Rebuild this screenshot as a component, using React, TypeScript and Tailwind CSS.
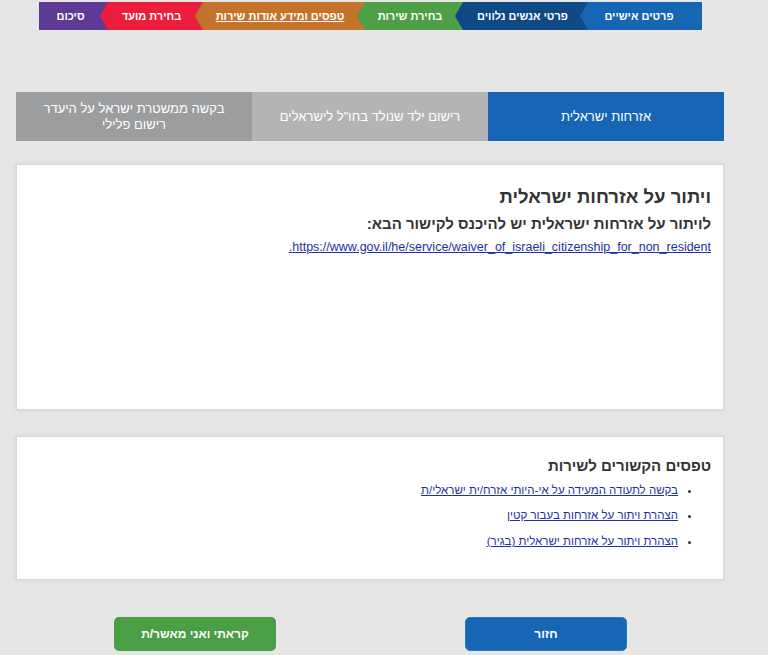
import React from "react";

const arrow = "[clip-path:polygon(0_50%,8px_0,100%_0,100%_100%,8px_100%)]";

export default function App() {
  return (
    <div
      dir="rtl"
      className="min-h-[655px] w-full bg-[#e6e6e6] pb-4"
      style={{ fontFamily: '"Liberation Sans", Arial, sans-serif' }}
    >
      {/* step bar */}
      <div className="flex pt-[2px] pr-[66px]">
        <div className={`relative z-[6] flex h-[28px] w-[122px] items-center justify-center bg-[#1666b5] pr-[4px] text-[11px] font-bold text-white ${arrow}`}>
          פרטים אישיים
        </div>
        <div className={`relative z-[5] -mr-[8px] flex h-[28px] w-[133px] items-center justify-center bg-[#0f4a86] pl-[2px] text-[11px] font-bold text-white ${arrow}`}>
          פרטי אנשים נלווים
        </div>
        <div className={`relative z-[4] -mr-[8px] flex h-[28px] w-[106px] items-center justify-center bg-[#4d9e45] text-[11px] font-bold text-white ${arrow}`}>
          בחירת שירות
        </div>
        <div className={`relative z-[3] -mr-[8px] flex h-[28px] w-[170px] items-center justify-center bg-[#c4742a] text-[11px] font-bold text-white underline ${arrow}`}>
          טפסים ומידע אודות שירות
        </div>
        <div className={`relative z-[2] -mr-[8px] flex h-[28px] w-[103px] items-center justify-center bg-[#ec1e3c] text-[11px] font-bold text-white ${arrow}`}>
          בחירת מועד
        </div>
        <div className="relative z-[1] -mr-[8px] flex h-[28px] w-[69px] items-center justify-center bg-[#5d3a94] pr-[6px] text-[11px] font-bold text-white">
          סיכום
        </div>
      </div>

      <div className="mr-[44px] ml-[16px]">
        {/* tabs */}
        <div className="mt-[62px] grid h-[49px] grid-cols-3">
          <div className="flex items-center justify-center bg-[#1666b5] text-[13px] text-white">
            אזרחות ישראלית
          </div>
          <div className="flex items-center justify-center bg-[#b4b4b4] text-[13px] text-white">
            רישום ילד שנולד בחו"ל לישראלים
          </div>
          <div className="flex flex-col items-center justify-center bg-[#9b9d9f] text-[13px] leading-[16px] text-white">
            <span>בקשה ממשטרת ישראל על היעדר</span>
            <span>רישום פלילי</span>
          </div>
        </div>

        {/* card 1 */}
        <div className="mt-[23px] h-[246px] border border-[#d9d9d9] bg-white px-[12px] pt-[20px] shadow-[0_0_4px_rgba(0,0,0,0.10)]">
          <h2 className="text-[18.5px] font-bold leading-[24px] text-[#333]">ויתור על אזרחות ישראלית</h2>
          <h3 className="mt-[5px] text-[15px] font-bold leading-[20px] text-[#333]">
            לויתור על אזרחות ישראלית יש להיכנס לקישור הבא:
          </h3>
          <p className="mt-[5px] text-[12.5px] leading-[16px]">
            <a href="#" className="text-[#1f2fa8] underline">
              https://www.gov.il/he/service/waiver_of_israeli_citizenship_for_non_resident.
            </a>
          </p>
        </div>

        {/* card 2 */}
        <div className="mt-[26px] h-[144px] border border-[#d9d9d9] bg-white px-[12px] pt-[19px] shadow-[0_0_4px_rgba(0,0,0,0.10)]">
          <h3 className="text-[15px] font-bold leading-[20px] text-[#333]">טפסים הקשורים לשירות</h3>
          <ul className="mt-[6px] list-disc pr-[33px] text-[11.5px] leading-[16px] text-[#333]">
            <li>
              <a href="#" className="text-[#1f2fa8] underline">בקשה לתעודה המעידה על אי-היותי אזרח/ית ישראלי/ת</a>
            </li>
            <li className="mt-[9px]">
              <a href="#" className="text-[#1f2fa8] underline">הצהרת ויתור על אזרחות בעבור קטין</a>
            </li>
            <li className="mt-[10px]">
              <a href="#" className="text-[#1f2fa8] underline">הצהרת ויתור על אזרחות ישראלית (בגיר)</a>
            </li>
          </ul>
        </div>

        {/* buttons */}
        <div className="mt-[37px] flex gap-[189px] pr-[97px]">
          <button className="h-[34px] w-[162px] rounded-[5px] border border-[#2a78c6] bg-[#1666b5] text-[12px] font-bold text-white">
            חזור
          </button>
          <button className="h-[34px] w-[162px] rounded-[5px] bg-[#4a9e46] text-[12px] font-bold text-white">
            קראתי ואני מאשר/ת
          </button>
        </div>
      </div>
    </div>
  );
}
